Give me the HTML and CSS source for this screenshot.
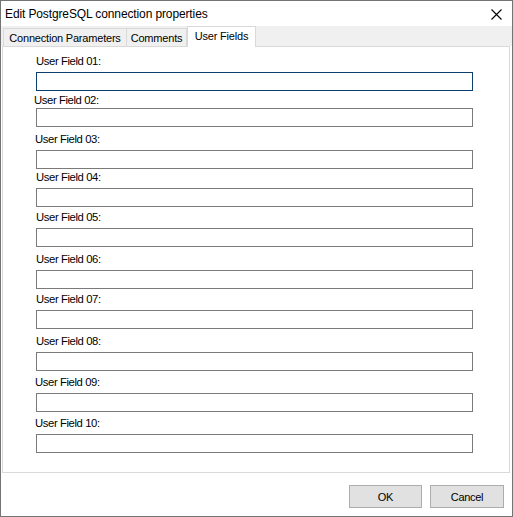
FILE: index.html
```html
<!DOCTYPE html>
<html>
<head>
<meta charset="utf-8">
<title>Edit PostgreSQL connection properties</title>
<link rel="stylesheet" href="styles.css">
</head>
<body>
<div class="window">
  <div class="titlebar">
    <span class="title">Edit PostgreSQL connection properties</span>
    <span class="close">
      <svg width="11" height="11" viewBox="0 0 11 11"><path d="M0.5 0.5 L10.5 10.5 M10.5 0.5 L0.5 10.5" stroke="#000" stroke-width="1.1" fill="none"/></svg>
    </span>
  </div>
  <div class="tabs">
    <div class="tab tab-conn">Connection Parameters</div>
    <div class="tab tab-comments">Comments</div>
    <div class="tab tab-active">User Fields</div>
  </div>
  <div class="panel">
    <div class="field f1"><label>User Field 01:</label><input class="input focused" type="text"></div>
    <div class="field f2"><label>User Field 02:</label><input class="input" type="text"></div>
    <div class="field f3"><label>User Field 03:</label><input class="input" type="text"></div>
    <div class="field f4"><label>User Field 04:</label><input class="input" type="text"></div>
    <div class="field f5"><label>User Field 05:</label><input class="input" type="text"></div>
    <div class="field f6"><label>User Field 06:</label><input class="input" type="text"></div>
    <div class="field f7"><label>User Field 07:</label><input class="input" type="text"></div>
    <div class="field f8"><label>User Field 08:</label><input class="input" type="text"></div>
    <div class="field f9"><label>User Field 09:</label><input class="input" type="text"></div>
    <div class="field f10"><label>User Field 10:</label><input class="input" type="text"></div>
  </div>
  <div class="footer">
    <button class="btn">OK</button>
    <button class="btn">Cancel</button>
  </div>
</div>
</body>
</html>
```
FILE: styles.css
```css
* { box-sizing: border-box; }
html, body { margin: 0; padding: 0; background: #fff; }
body { font-family: "Liberation Sans", Arial, sans-serif; color: #000; }

.window {
  width: 513px;
  height: 517px;
  border: 1px solid #747474;
  background: #fff;
  display: flex;
  flex-direction: column;
}

.titlebar {
  height: 25px;
  display: flex;
  align-items: center;
  justify-content: space-between;
  padding: 0 10px 0 4px;
}
.title {
  font-size: 12px;
  letter-spacing: -0.12px;
}
.close { display: flex; width: 11px; height: 11px; margin-top: 1px; }

.tabs {
  height: 20px;
  background: #f0f0f0;
  display: flex;
  align-items: flex-start;
  padding-left: 2px;
}
.tab {
  margin-top: 2px;
  height: 18px;
  border: 1px solid #d9d9d9;
  border-bottom: none;
  background: #f0f0f0;
  font-size: 11px;
  letter-spacing: -0.2px;
  display: flex;
  align-items: center;
  justify-content: center;
  padding-top: 1px;
}
.tab-conn { width: 124px; }
.tab-comments { width: 61px; margin-left: -1px; }
.tab-active {
  margin-top: 0;
  margin-left: 0;
  width: 69px;
  height: 21px;
  background: #fff;
  position: relative;
  z-index: 1;
  padding-top: 0;
  padding-bottom: 2px;
}

.panel {
  height: 427px;
  margin: 0 2px 0 1px;
  border: 1px solid #d9d9d9;
  background: #fff;
  padding: 7px 36px 0 33px;
  display: flex;
  flex-direction: column;
}
.field { display: flex; flex-direction: column; }
.field label {
  height: 14px;
  line-height: 14px;
  font-size: 11.3px;
  letter-spacing: -0.4px;
  color: #000;
  margin-bottom: 4px;
}
.input {
  height: 19px;
  width: 100%;
  border: 1px solid #7a7a7a;
  background: #fff;
  padding: 0 2px;
  margin: 0;
  outline: none;
  font: 11px "Liberation Sans", Arial, sans-serif;
}
.input.focused { border-color: #0c3d6f; }

.f2 { margin-top: 2px; }
.f2 label { margin-bottom: 1px; margin-left: -2px; }
.f3 { margin-top: 5px; }
.f3 label { margin-left: -1px; }
.f4 { margin-top: 1px; }
.f5 { margin-top: 3px; }
.f6 { margin-top: 5px; }
.f7 { margin-top: 3px; }
.f8 { margin-top: 5px; }
.f9 { margin-top: 4px; }
.f9 label { margin-left: -1px; }
.f10 { margin-top: 4px; }
.f10 label { margin-left: -1px; }

.footer {
  flex: 1;
  display: flex;
  justify-content: flex-end;
  align-items: flex-start;
  padding: 12px 8px 0 0;
  gap: 8px;
}
.btn {
  width: 73px;
  height: 23px;
  border: 1px solid #adadad;
  background: #e1e1e1;
  font: 11px "Liberation Sans", Arial, sans-serif;
  letter-spacing: -0.3px;
  color: #000;
  padding: 0;
  margin: 0;
}
.btn + .btn { width: 74px; }
```
